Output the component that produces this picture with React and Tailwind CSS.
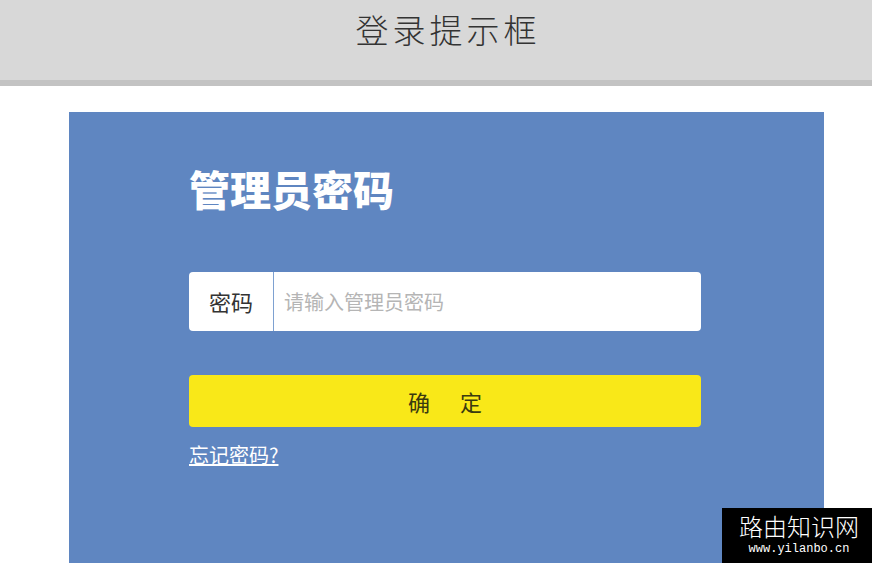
export default function App() {
  const cjk = { fontFamily: '"Noto Sans CJK SC", sans-serif' };
  return (
    <div className="w-[872px] h-[563px] overflow-hidden bg-white relative" style={cjk}>
      <div className="h-[80px] bg-[#d8d8d8] flex items-center justify-center">
        <div className="text-[33px] font-light text-[#333333] tracking-[4px] -mt-[22px] ml-[24px] leading-none">登录提示框</div>
      </div>
      <div className="h-[6px] bg-[#c3c3c3]"></div>
      <div className="pt-[26px] pl-[69px]">
        <div className="w-[755px] h-[451px] bg-[#5f86c1] pl-[120px] pt-[56px]">
          <div className="text-[41px] font-black text-white leading-none">管理员密码</div>
          <div className="mt-[63px] w-[512px] h-[59px] bg-white rounded-[4px] flex items-center">
            <div className="w-[85px] h-full flex items-center justify-center text-[22px] text-[#333] border-r border-[#7ea1d1]">密码</div>
            <div className="pl-[10px] text-[20px] text-[#b5b5b5]">请输入管理员密码</div>
          </div>
          <div className="mt-[44px] w-[512px] h-[52px] bg-[#f9e818] rounded-[4px] flex items-center justify-center text-[22px] text-[#3a3a10]">
            <span>确</span>
            <span className="ml-[30px]">定</span>
          </div>
          <div className="mt-[14px] text-[20px] text-white underline leading-[28px]">忘记密码?</div>
        </div>
      </div>
      <div className="absolute left-[722px] top-[508px] w-[150px] h-[55px] bg-black flex flex-col items-center pt-[4px]">
        <div className="text-[24px] text-white leading-[28px] font-light ml-[4px]">路由知识网</div>
        <div className="text-[12px] text-white leading-[14px] mt-[2px] ml-[4px]" style={{ fontFamily: '"Liberation Mono", monospace' }}>www.yilanbo.cn</div>
      </div>
    </div>
  );
}
